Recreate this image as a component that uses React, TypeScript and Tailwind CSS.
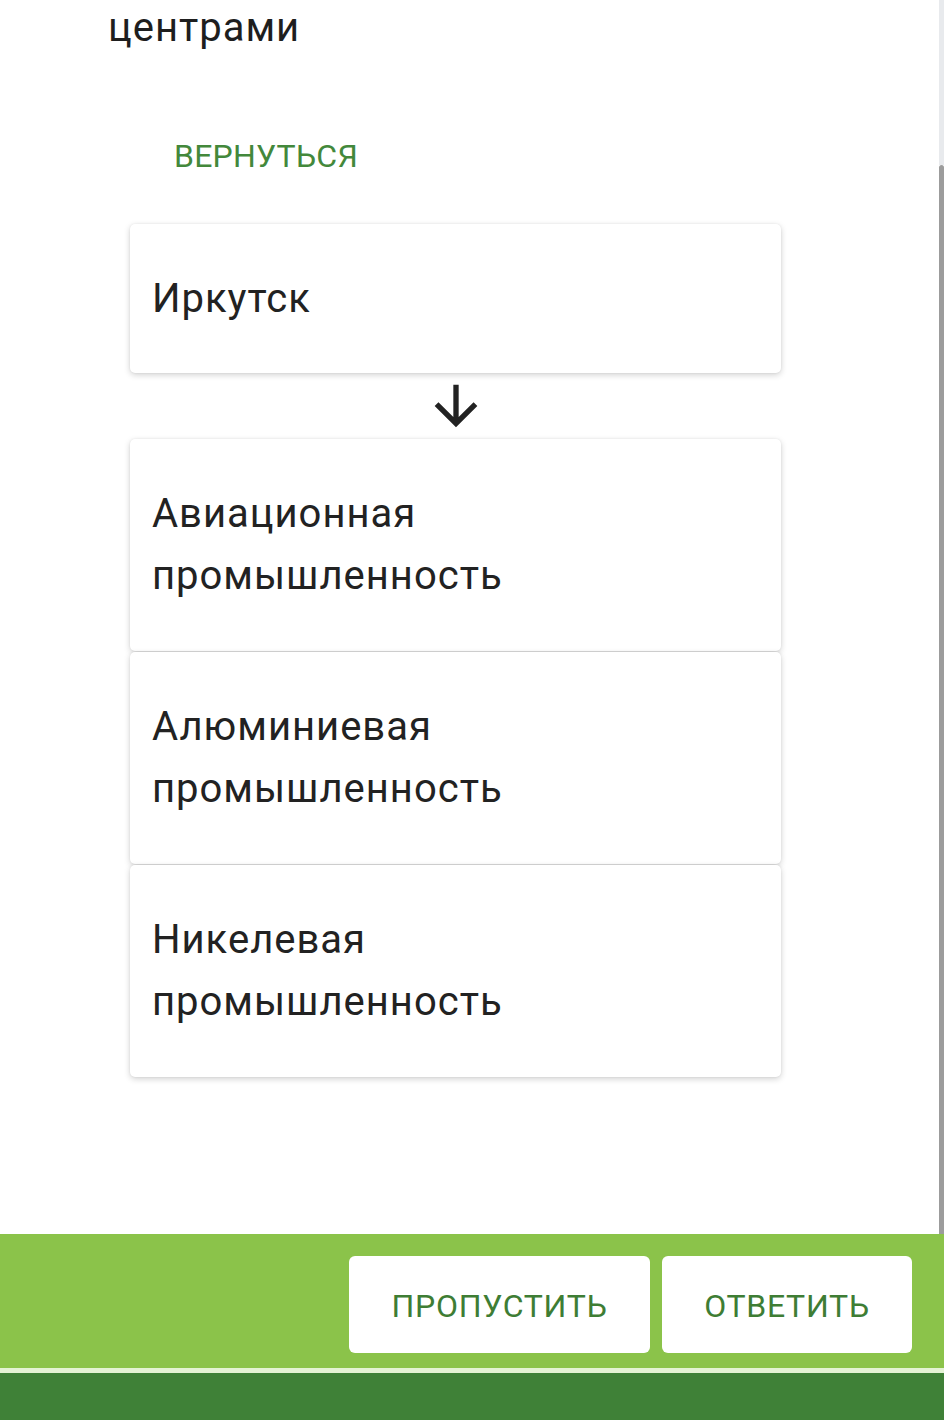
import React from "react";

const font = { fontFamily: "Roboto, 'Noto Sans', sans-serif" };

function Card({ children }: { children: React.ReactNode }) {
  return (
    <div className="w-[651px] rounded-[5px] bg-white px-[22px] py-[44px] text-[40px] leading-[62px] tracking-[1px] text-[#222222] shadow-[0_2px_6px_rgba(0,0,0,0.18),0_0_2px_rgba(0,0,0,0.08)]">
      {children}
    </div>
  );
}

export default function App() {
  return (
    <div className="w-[944px] h-[1420px] bg-white flex flex-col overflow-hidden" style={font}>
      <div className="flex h-[1234px]">
        <div className="flex-1 flex flex-col">
          <div className="pl-[108px] pt-[4px] text-[40px] leading-[48px] tracking-[1px] text-[#1e1e1e]">центрами</div>
          <div className="pl-[174px] mt-[88px] text-[32px] leading-[32px] text-[#43883b] tracking-[0.2px]">ВЕРНУТЬСЯ</div>
          <div className="pl-[130px] mt-[52px] flex flex-col">
            <div className="w-[651px] h-[149px] flex items-center rounded-[5px] bg-white px-[22px] pt-[1px] text-[40px] leading-[62px] tracking-[1px] text-[#222222] shadow-[0_2px_6px_rgba(0,0,0,0.18),0_0_2px_rgba(0,0,0,0.08)]">
              Иркутск
            </div>
            <div className="w-[651px] flex justify-center h-[66px]">
              <svg width="64" height="64" viewBox="0 0 24 24" className="mt-[1px]">
                <path d="M20 12l-1.41-1.41L13 16.17V4h-2v12.17l-5.58-5.59L4 12l8 8 8-8z" fill="#222222" />
              </svg>
            </div>
            <div className="flex flex-col gap-[1px]">
              <Card>
                Авиационная
                <br />
                промышленность
              </Card>
              <Card>
                Алюминиевая
                <br />
                промышленность
              </Card>
              <Card>
                Никелевая
                <br />
                промышленность
              </Card>
            </div>
          </div>
        </div>
        <div className="w-[5px] flex flex-col">
          <div className="h-[165px] bg-[#e8eaed]" />
          <div className="flex-1 bg-[#9c9c9c] rounded-t-[3px]" />
        </div>
      </div>
      <div className="h-[134px] bg-[#8bc34a] flex justify-end items-start gap-[12px] pt-[22px] pr-[32px]">
        <button className="w-[301px] h-[97px] pt-[3px] bg-white rounded-[6px] text-[32px] text-[#3e7d34] tracking-[0.7px]" style={font}>
          ПРОПУСТИТЬ
        </button>
        <button className="w-[250px] h-[97px] pt-[3px] bg-white rounded-[6px] text-[32px] text-[#3e7d34] tracking-[0.7px]" style={font}>
          ОТВЕТИТЬ
        </button>
      </div>
      <div className="h-[5px] bg-[#e4f3d4]" />
      <div className="flex-1 bg-[#3f8137]" />
    </div>
  );
}
